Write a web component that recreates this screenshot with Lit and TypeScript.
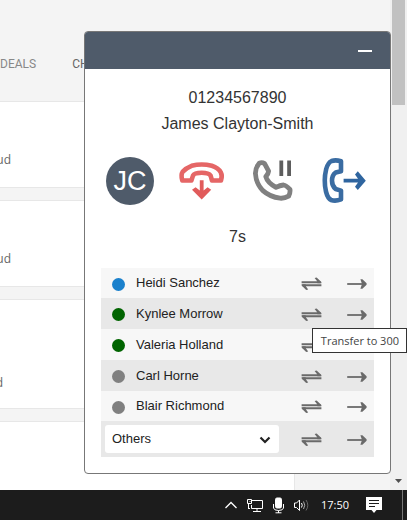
import { LitElement, html, css, svg } from "lit";
import { customElement } from "lit/decorators.js";

interface Contact {
  name: string;
  status: "ringing" | "free" | "offline";
}

const CONTACTS: Contact[] = [
  { name: "Heidi Sanchez", status: "ringing" },
  { name: "Kynlee Morrow", status: "free" },
  { name: "Valeria Holland", status: "free" },
  { name: "Carl Horne", status: "offline" },
  { name: "Blair Richmond", status: "offline" },
];

const swapIcon = html`<svg width="22" height="16" viewBox="0 0 22 16" aria-hidden="true">
  <path d="M.6 7.2H19.6M1.4 10.3H20.4" stroke="#6a6a6a" stroke-width="2" fill="none" />
  <path d="M13.6 3L15.6 2.4L20.4 7V8.2H16.4L16 6Z" fill="#6a6a6a" />
  <path d="M7.2 14.4L5.2 15L.6 10.5V9.3H4.6L5 11.5Z" fill="#6a6a6a" />
</svg>`;

const arrowIcon = html`<svg width="22" height="16" viewBox="0 0 22 16" aria-hidden="true">
  <path d="M1.2 9H19" stroke="#6a6a6a" stroke-width="1.8" fill="none" />
  <path d="M14.4 4.2H16.4L20.6 8.2V9.8L16.4 13.8H14.4L16 9Z" fill="#6a6a6a" />
</svg>`;

const hangUpIcon = html`<svg width="48" height="48" viewBox="0 0 48 48" aria-hidden="true">
  <path d="M4.3 23.5Q2.6 18 4.8 14.6Q8 11 13.6 8.8Q23.7 6.2 33.8 8.8Q40.4 11 42.8 15.4Q44.6 19 43 23.5H34L32.6 18.6Q30.6 15.8 23.8 15.8Q16.4 15.8 15 18.6L13.4 23.5Z"
    fill="none" stroke="#e56666" stroke-width="4.6" stroke-linejoin="round" />
  <path d="M21.8 23.2H25.6V33.6L29.6 30.2L33.2 32.8L23.7 42.6L14 32.8L17.6 30.2L21.8 33.6Z" fill="#e15b5b" />
</svg>`;

const holdIcon = html`<svg width="48" height="48" viewBox="-1 0 48 48" aria-hidden="true">
  <path d="M9.2 6.2Q12 5 14.6 6.6L18.6 14.2Q18.4 16.6 15.8 19.6Q17.4 25.6 26 30.3Q30 28.4 33.6 28Q36 28.4 40 32.4Q40.4 36 38.6 39.2Q34.4 41.6 30 41.2Q20 40 12.6 33.4Q6 26.4 5.4 16.4Q5.6 10.4 9.2 6.2Z"
    fill="none" stroke="#808080" stroke-width="4.8" stroke-linejoin="round" />
  <path d="M29.4 3.5H33.2V19H29.4ZM37.2 3.5H41V19H37.2Z" fill="#5d5d5d" />
</svg>`;

const forwardIcon = html`<svg width="48" height="48" viewBox="1 0 48 48" aria-hidden="true">
  <path d="M21 4.2Q15.6 2.6 11.6 4Q8 5.6 6.2 12Q3.4 23.6 6 34.6Q7.8 41.6 11.2 43Q15.4 44.6 21 42.4V33.6L15.6 32Q12 29 12 23.7Q12 18.2 15.6 15.6L21 14.2Z"
    fill="none" stroke="#3a6ca2" stroke-width="4.6" stroke-linejoin="round" />
  <path d="M23.6 21.8H38L35 17.6L37.8 14.2L45.8 23.7L37.8 33L35 29.8L38 25.4H23.6Z" fill="#2f659f" />
</svg>`;

@customElement("call-panel")
export class CallPanel extends LitElement {
  static styles = css`
    :host {
      display: block;
      box-sizing: border-box;
      border: 1px solid #777;
      border-radius: 4px;
      background: #fff;
      color: #333;
      font: 16px/26px "Liberation Sans", Arial, sans-serif;
    }
    .header {
      display: flex;
      justify-content: flex-end;
      align-items: center;
      height: 37px;
      padding: 0 16px;
      border-radius: 3px 3px 0 0;
      background: #4f5b6a;
    }
    button {
      display: inline-flex;
      align-items: center;
      justify-content: center;
      padding: 0;
      border: 0;
      background: none;
      color: inherit;
      font: inherit;
      cursor: pointer;
    }
    svg {
      display: block;
    }
    .minimise {
      width: 18px;
      height: 18px;
    }
    .caller {
      margin: 0;
      padding-top: 16px;
      text-align: center;
    }
    .caller p {
      margin: 0;
    }
    .actions {
      display: flex;
      justify-content: space-between;
      padding: 20px 21px 0;
    }
    .avatar {
      display: flex;
      align-items: center;
      justify-content: center;
      width: 48px;
      height: 48px;
      border-radius: 50%;
      background: #4f5b6a;
      color: #fff;
      font-size: 27px;
    }
    .timer {
      margin: 19px 0 18px;
      text-align: center;
    }
    .body {
      padding: 0 16px 16px;
    }
    table {
      width: 100%;
      table-layout: fixed;
      border-collapse: collapse;
      font-size: 13px;
      line-height: 20px;
      color: #222;
    }
    tr {
      height: 31px;
      background: #f7f7f7;
    }
    tr:nth-child(4n + 1) {
      height: 30px;
    }
    tr:nth-child(even) {
      background: #e8e8e8;
    }
    tr.others {
      height: 36px;
    }
    td {
      padding: 0;
      vertical-align: middle;
    }
    .col-status {
      width: 35px;
    }
    .col-swap {
      width: 57px;
    }
    .col-arrow {
      width: 34px;
    }
    td button {
      width: 100%;
      height: 20px;
      vertical-align: middle;
    }
    .dot {
      display: block;
      width: 13px;
      height: 13px;
      margin: 2px 0 0 11px;
      border-radius: 50%;
    }
    .ringing {
      background: #1a80cc;
    }
    .free {
      background: #006400;
    }
    .offline {
      background: #808080;
    }
    .picker {
      display: grid;
      align-items: center;
      margin: 0 4px;
    }
    .picker > * {
      grid-area: 1 / 1;
    }
    select {
      appearance: none;
      width: 100%;
      height: 28px;
      padding: 0 7px;
      border: 0;
      border-radius: 3px;
      background: #fff;
      color: #222;
      font: inherit;
    }
    .chevron {
      justify-self: end;
      margin: 2px 8px 0 0;
      pointer-events: none;
    }
  `;

  private transferCells(name: string) {
    return html`
      <td><button type="button" aria-label="Consult ${name}">${swapIcon}</button></td>
      <td><button type="button" aria-label="Transfer to ${name}">${arrowIcon}</button></td>
    `;
  }

  render() {
    return html`
      <div class="header">
        <button class="minimise" type="button" aria-label="Minimise">
          <svg width="14" height="2" viewBox="0 0 14 2"><path d="M0 0H14V2H0Z" fill="#fff" /></svg>
        </button>
      </div>
      <div class="caller">
        <p>01234567890</p>
        <p>James Clayton-Smith</p>
      </div>
      <div class="actions">
        <div class="avatar">JC</div>
        <button type="button" aria-label="Hang up">${hangUpIcon}</button>
        <button type="button" aria-label="Hold">${holdIcon}</button>
        <button type="button" aria-label="Forward">${forwardIcon}</button>
      </div>
      <div class="timer">7s</div>
      <div class="body">
        <table aria-label="Transfer targets">
          <colgroup>
            <col class="col-status" />
            <col />
            <col class="col-swap" />
            <col class="col-arrow" />
          </colgroup>
          <tbody>
            ${CONTACTS.map(
              (c) => html`<tr>
                <td><span class="dot ${c.status}"></span></td>
                <td>${c.name}</td>
                ${this.transferCells(c.name)}
              </tr>`
            )}
            <tr class="others">
              <td colspan="2">
                <div class="picker">
                  <select aria-label="Other contacts">
                    <option>Others</option>
                  </select>
                  <svg class="chevron" width="12" height="8" viewBox="0 0 12 8" aria-hidden="true">
                    <path d="M1.5 1.5L6 6L10.5 1.5" fill="none" stroke="#222" stroke-width="2.2" />
                  </svg>
                </div>
              </td>
              ${this.transferCells("other contact")}
            </tr>
          </tbody>
        </table>
      </div>
    `;
  }
}

@customElement("task-bar")
export class TaskBar extends LitElement {
  static styles = css`
    :host {
      display: flex;
      justify-content: flex-end;
      align-items: center;
      height: 30px;
      background: #1c1c1c;
      color: #fff;
      font: 11px/16px "Open Sans", "Noto Sans", sans-serif;
    }
    .tray {
      display: flex;
      align-items: center;
      gap: 7px;
    }
    svg {
      display: block;
    }
    time {
      margin-left: 11px;
    }
    .notes {
      margin: 0 20px 0 17px;
    }
    .desktop {
      align-self: stretch;
      width: 4px;
      border-left: 1px solid #777;
    }
  `;

  render() {
    const icon = (w: number, body: unknown) =>
      html`<svg width=${w} height="18" viewBox="0 0 ${w} 18" fill="none" stroke="#fff" aria-hidden="true">${body}</svg>`;
    return html`
      <div class="tray">
        ${icon(14, svg`<path d="M.5 12L6 6.5L11.5 12" stroke-width="1.3" />`)}
        ${icon(17, svg`<path d="M6 4.5H16.5V12.5H5.5V9M11 12.5V15.5M7 15.5H15" /><path d="M1.5 3.5H5.5V7.5H1.5ZM2.5 7.5V12.5M4 5V6M2 12.5H4" />`)}
        ${icon(16, svg`<rect x="5.5" y="2" width="6" height="10" rx="1.5" fill="#fff" /><path d="M3.5 8V12Q4 14.5 8.5 14.5Q13 14.5 13.5 12V8M8.5 14.5V17M5.5 16.8H11.5" />`)}
        ${icon(17, svg`<path d="M1.5 7H3.5L6.5 4V14.5L3.5 11.5H1.5Z" /><path d="M8.5 7Q10 9.2 8.5 11.5" /><path d="M10.5 5.5Q13 9.2 10.5 13" stroke="#aaa" /><path d="M13 4Q16.6 9.2 13 14.5" stroke="#666" />`)}
      </div>
      <time>17:50</time>
      <div class="notes">
        ${icon(16, svg`<path d="M0 1H16V14H10.5L8 17L5.5 14H0Z" fill="#fff" stroke="none" /><path d="M3 4.5H13M3 7.5H13M3 10.5H9" stroke="#1c1c1c" />`)}
      </div>
      <div class="desktop"></div>
    `;
  }
}

@customElement("app-root")
export class AppRoot extends LitElement {
  static styles = css`
    :host {
      display: flex;
      flex-direction: column;
      height: 100vh;
      overflow: hidden;
    }
    .workspace {
      position: relative;
      display: flex;
      flex: 1;
      min-height: 0;
    }
    .page {
      flex: 1;
      min-width: 0;
      overflow: hidden;
      background: #f4f4f4;
      color: #666;
      font: 12px/16px "Open Sans", "Noto Sans", sans-serif;
    }
    nav {
      display: flex;
      gap: 36px;
      padding: 56px 0 29px;
      font-family: Roboto, sans-serif;
    }
    nav a {
      color: #666;
      text-decoration: none;
    }
    nav a:first-child {
      color: #888;
    }
    .cards {
      display: grid;
      gap: 12px;
      margin-right: 95px;
    }
    .card {
      box-sizing: border-box;
      height: 87px;
      padding-top: 50px;
      border: 1px solid #e7e7e7;
      border-left: 0;
      background: #fff;
    }
    .card.tall {
      height: 110px;
      padding-top: 75px;
    }
    .tag {
      display: flex;
      justify-content: flex-end;
      width: 11px;
    }
    .tag.short {
      width: 3px;
    }
    .scrollbar {
      display: flex;
      flex-direction: column;
      justify-content: space-between;
      align-items: center;
      width: 17px;
      background: #f0f0f0;
    }
    .thumb {
      width: 13px;
      height: 105px;
      background: #c1c1c1;
    }
    .down {
      display: block;
      margin-bottom: 7px;
    }
    call-panel {
      position: absolute;
      right: 16px;
      bottom: 16px;
      width: 307px;
      max-width: calc(100% - 32px);
    }
    .tooltip {
      position: absolute;
      right: 0;
      bottom: 137px;
      padding: 3px 7px 3px 8px;
      border: 1px solid #333;
      background: #fff;
      color: #444;
      font: 11px/17px "Open Sans", "Noto Sans", sans-serif;
    }
  `;

  render() {
    return html`
      <div class="workspace">
        <div class="page">
          <nav><a href="#deals">DEALS</a><a href="#ch">CH</a></nav>
          <div class="cards">
            <div class="card"><span class="tag">ud</span></div>
            <div class="card"><span class="tag">ud</span></div>
            <div class="card tall"><span class="tag short">d</span></div>
            <div class="card"></div>
          </div>
        </div>
        <div class="scrollbar">
          <div class="thumb"></div>
          <svg class="down" width="7" height="4" viewBox="0 0 7 4"><path d="M0 0H7L3.5 4Z" fill="#505050" /></svg>
        </div>
        <call-panel></call-panel>
        <div class="tooltip" role="tooltip">Transfer to 300</div>
      </div>
      <task-bar></task-bar>
    `;
  }
}
